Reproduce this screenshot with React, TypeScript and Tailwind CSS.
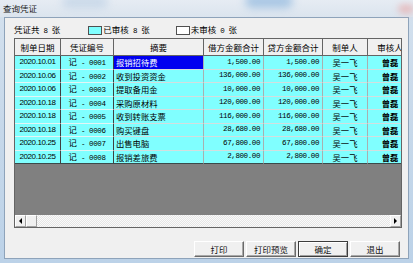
import React from "react";

const MONO = "font-['Liberation_Mono',monospace] text-[7.5px] tracking-[-0.4px]";
const DATE = "font-['Liberation_Sans',sans-serif] text-[8px] tracking-[-0.4px]";

const rows: [string, string, string, string][] = [
  ["2020.10.01", "0001", "报销招待费", "1,500.00"],
  ["2020.10.06", "0002", "收到投资资金", "136,000.00"],
  ["2020.10.06", "0003", "提取备用金", "10,000.00"],
  ["2020.10.18", "0004", "采购原材料", "120,000.00"],
  ["2020.10.18", "0005", "收到转账支票", "116,000.00"],
  ["2020.10.18", "0006", "购买键盘", "28,680.00"],
  ["2020.10.25", "0007", "出售电脑", "67,800.00"],
  ["2020.10.25", "0008", "报销差旅费", "2,800.00"],
];

const headers = ["制单日期", "凭证编号", "摘要", "借方金额合计", "贷方金额合计", "制单人", "审核人"];
const widths = ["w-[46px]", "w-[53px]", "w-[90px]", "w-[60px]", "w-[59px]", "w-[45px]", "w-[45px]"];

function Btn({ label, def }: { label: string; def?: boolean }) {
  return (
    <div
      className={
        "w-[50px] h-[16px] flex items-center justify-center bg-[#f0f0f0] text-[8.5px] leading-none text-[#111] " +
        (def
          ? "border border-[#3c3c3c] shadow-[inset_1px_1px_0_#ffffff,inset_-1px_-1px_0_#a0a0a0]"
          : "border border-t-white border-l-white border-r-[#6a6a6a] border-b-[#6a6a6a] shadow-[inset_-1px_-1px_0_#a8a8a8]")
      }
    >
      {label}
    </div>
  );
}

export default function App() {
  return (
    <div className="relative w-[413px] h-[263px] overflow-hidden flex flex-col bg-gradient-to-b from-[#d4e1ee] via-[#c6d8ea] to-[#bcd2e8] font-['Noto_Sans_CJK_SC',sans-serif] text-black">
      {/* title bar */}
      <div className="relative h-[17px] shrink-0 flex items-center pl-[3px] bg-gradient-to-b from-[#e6ecf3] to-[#dbe4ee]">
        <span className="relative z-10 text-[8.5px] leading-none text-[#1c1c1c]">查询凭证</span>
        <div className="absolute left-[62px] top-[-4px] w-[46px] h-[12px] rounded-full bg-[#b7cde3] opacity-60 blur-[4px]" />
        <div className="absolute left-[245px] top-[-6px] w-[48px] h-[14px] rounded-full bg-[#6da3d6] opacity-50 blur-[4px]" />
        <div className="absolute left-[398px] top-[4px] w-[16px] h-[10px] rounded-full bg-[#e8a6a6] opacity-60 blur-[3px]" />
      </div>

      {/* client area */}
      <div className="flex-1 mx-[4px] mb-[4px] border border-[#8ea3ba] bg-[#f0f0f0] flex flex-col">
        {/* counters */}
        <div className="h-[20px] pt-[4px] pl-[9px] flex items-center text-[8.5px] leading-none shrink-0">
          <span className="whitespace-pre">
            凭证共<span className={MONO}>{" 8 "}</span>张
          </span>
          <div className="ml-[28px] w-[14px] h-[9px] bg-[#80ffff] border border-[#505050]" />
          <span className="ml-[1px] whitespace-pre">
            已审核<span className={MONO}>{" 8 "}</span>张
          </span>
          <div className="ml-[26px] w-[14px] h-[9px] bg-white border border-[#505050]" />
          <span className="ml-[1px] whitespace-pre">
            未审核<span className={MONO}>{" 0 "}</span>张
          </span>
        </div>

        {/* grid */}
        <div className="ml-[9px] w-[388px] h-[190px] shrink-0 border border-[#646464] flex flex-col overflow-hidden">
          <div className="flex h-[17px] shrink-0">
            {headers.map((h, i) => (
              <div
                key={h}
                className={
                  widths[i] +
                  " shrink-0 h-full flex items-center justify-center bg-[#f0f0f0] border-r border-b border-[#646464] text-[8.5px] leading-none whitespace-nowrap overflow-hidden"
                }
              >
                {h}
              </div>
            ))}
          </div>
          {rows.map((r, idx) => {
            const last = idx === rows.length - 1;
            const hb = last ? "border-b-[#3a4a4a]" : "border-b-[#e4f4f4]";
            const db = last ? "border-b-[#3a4a4a]" : "border-b-[#d4dede]";
            return (
              <div key={r[1]} className="flex h-[13.5px] shrink-0">
                <div className={"w-[46px] shrink-0 flex items-center justify-center bg-[#80ffff] border-r border-b border-r-[#404040] " + hb}>
                  <span className={DATE + " leading-none"}>{r[0]}</span>
                </div>
                <div className={"w-[53px] shrink-0 flex items-center justify-center bg-[#80ffff] border-r border-b border-r-[#404040] " + hb}>
                  <span className="text-[8.3px] leading-none whitespace-pre">
                    记<span className={MONO}>{" - " + r[1]}</span>
                  </span>
                </div>
                <div
                  className={
                    "w-[90px] shrink-0 flex items-center pl-[2px] border-r border-b border-r-[#a8b0b0] " +
                    db +
                    (idx === 0 ? " bg-[#0000f0] text-white" : " bg-[#80ffff]")
                  }
                >
                  <span className="text-[8.3px] leading-none whitespace-nowrap">{r[2]}</span>
                </div>
                <div className={"w-[60px] shrink-0 flex items-center justify-end pr-[3px] bg-[#80ffff] border-r border-b border-r-[#a8b0b0] " + db}>
                  <span className={MONO + " leading-none"}>{r[3]}</span>
                </div>
                <div className={"w-[59px] shrink-0 flex items-center justify-end pr-[3px] bg-[#80ffff] border-r border-b border-r-[#a8b0b0] " + db}>
                  <span className={MONO + " leading-none"}>{r[3]}</span>
                </div>
                <div className={"w-[45px] shrink-0 flex items-center justify-center bg-[#80ffff] border-r border-b border-r-[#a8b0b0] " + db}>
                  <span className="text-[8.3px] leading-none">吴一飞</span>
                </div>
                <div className={"w-[45px] shrink-0 flex items-center justify-center bg-[#80ffff] border-r border-b border-r-[#a8b0b0] " + db}>
                  <span className="text-[8.3px] leading-none font-bold">曾磊</span>
                </div>
              </div>
            );
          })}
          <div className="flex-1 bg-[#808080]" />
          {/* horizontal scrollbar */}
          <div className="h-[12px] shrink-0 flex bg-[#f2f2f2]">
            <div className="w-[11px] h-full shrink-0 flex items-center justify-center bg-[#f0f0f0] border border-t-white border-l-white border-r-[#a0a0a0] border-b-[#a0a0a0]">
              <div className="w-0 h-0 border-y-[3px] border-y-transparent border-r-[3px] border-r-black" />
            </div>
            <div className="w-[11px] h-full shrink-0 bg-[#f0f0f0] border border-t-white border-l-white border-r-[#a0a0a0] border-b-[#a0a0a0]" />
            <div className="flex-1 bg-[image:repeating-conic-gradient(#e6e6e6_0_25%,#fafafa_0_50%)] bg-[length:2px_2px]" />
            <div className="w-[11px] h-full shrink-0 flex items-center justify-center bg-[#f0f0f0] border border-t-white border-l-white border-r-[#a0a0a0] border-b-[#a0a0a0]">
              <div className="w-0 h-0 border-y-[3px] border-y-transparent border-l-[3px] border-l-black" />
            </div>
          </div>
        </div>

        {/* buttons */}
        <div className="mt-[13px] pr-[8px] flex justify-end gap-[2px] shrink-0">
          <Btn label="打印" />
          <Btn label="打印预览" />
          <Btn label="确定" def />
          <Btn label="退出" />
        </div>
      </div>
    </div>
  );
}
